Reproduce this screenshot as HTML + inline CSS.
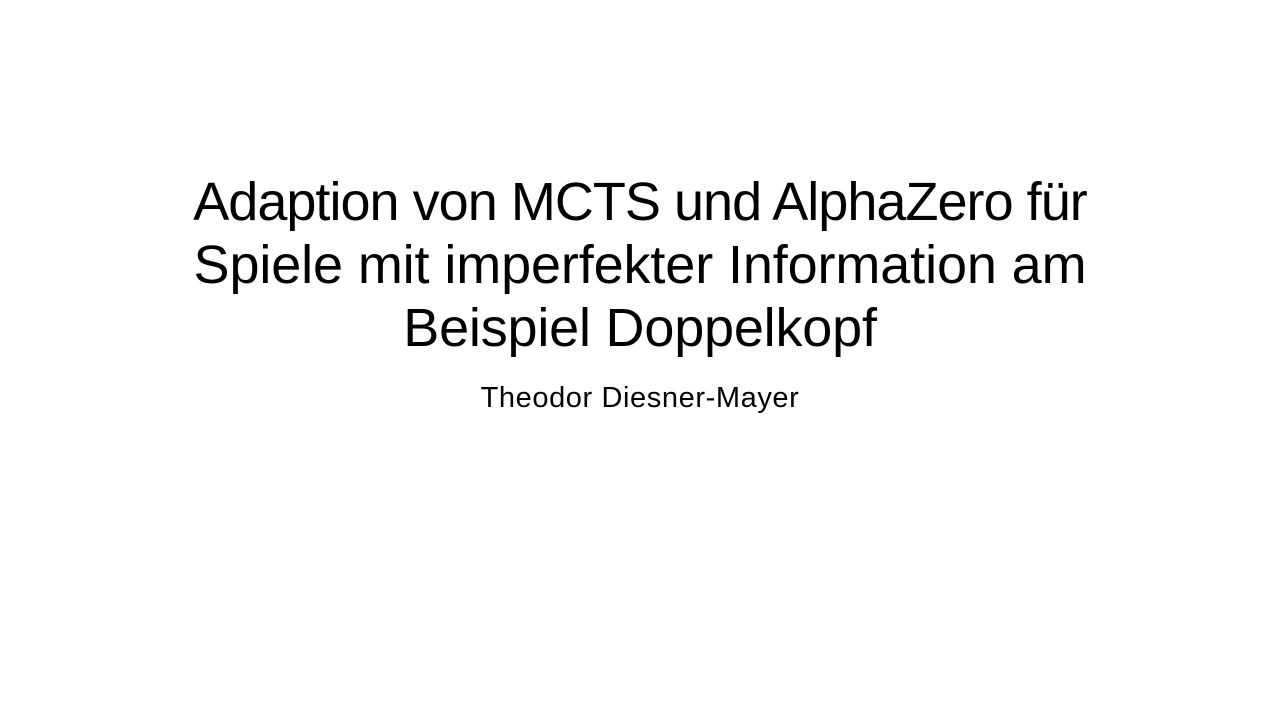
<!DOCTYPE html>
<html><head><meta charset="utf-8"><style>
html,body{margin:0;padding:0;background:#fff;}
body{width:1280px;height:720px;position:relative;overflow:hidden;font-family:"Liberation Sans",sans-serif;color:#000;}
.t{position:absolute;left:0;width:1280px;text-align:center;white-space:nowrap;}
.l{font-size:54px;line-height:63px;}
.s{font-size:29px;line-height:34px;letter-spacing:0.6px;}
</style></head><body>
<div class="t l" style="top:171px;letter-spacing:-0.97px">Adaption von MCTS und AlphaZero für</div>
<div class="t l" style="top:234px;letter-spacing:-0.12px">Spiele mit imperfekter Information am</div>
<div class="t l" style="top:297px;letter-spacing:-0.2px">Beispiel Doppelkopf</div>
<div class="t s" style="top:381px">Theodor Diesner-Mayer</div>
</body></html>
